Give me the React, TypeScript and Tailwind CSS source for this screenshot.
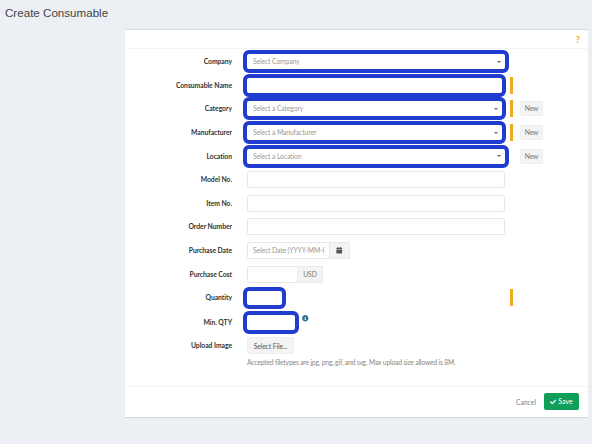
import { ReactNode } from "react"
import { FaCalendar, FaCheck, FaInfoCircle } from "react-icons/fa"

function Caret() {
  return <span className="absolute right-[4.5px] top-[6.5px] border-x-[2px] border-t-[2.5px] border-x-transparent border-t-[#666]" />
}

function Bar() {
  return <span className="h-[17px] w-[3px] bg-[#f0a826]" />
}

function NewButton() {
  return (
    <button className="flex h-[15px] w-[23px] items-center justify-center rounded-[1px] border border-[#eeeeee] bg-[#f4f4f4] pb-[1px] text-[6.8px] tracking-[-0.1px] text-[#777]">
      New
    </button>
  )
}

function Row({ label, children }: { label: string; children: ReactNode }) {
  return (
    <div className="flex h-[23.6px] items-center">
      <label className="w-[107px] pb-[1px] text-right text-[6.8px] font-bold tracking-[-0.05px] text-[#333]">{label}</label>
      <div className="ml-[15px] flex items-center">{children}</div>
    </div>
  )
}

function Select({ text, outlineWidth = "w-[258px]" }: { text: string; outlineWidth?: string }) {
  return (
    <div className={`relative flex h-[15px] items-center rounded-[2px] bg-white pb-[1px] pl-[6px] text-[6.8px] tracking-[-0.12px] text-[#999] outline-[4px] outline-[#1f3ccf] ${outlineWidth}`}>
      {text}
      <Caret />
    </div>
  )
}

function Input() {
  return <div className="h-[17px] w-[258px] rounded-[2px] border border-[#e8e8e8] bg-white" />
}

export default function App() {
  return (
    <div className="h-[444px] w-[592px] overflow-hidden bg-[#ecf0f5] font-['Lato',sans-serif]">
      <h1 className="h-[29px] pl-[5px] pt-[5px] font-['Liberation_Sans',sans-serif] text-[11.6px] leading-[15px] text-[#444]">
        Create Consumable
      </h1>
      <div className="ml-[125px] h-[388px] w-[463px] border-t border-[#d2d6de] bg-white shadow-[0_1px_1px_rgba(0,0,0,0.1)]">
        <div className="mb-[1px] flex h-[19px] justify-end border-b border-[#f4f4f4] pr-[8px] pt-[3px] text-[9px] font-bold text-[#e8a71c]">
          ?
        </div>
        <Row label="Company">
          <Select text="Select Company" />
        </Row>
        <Row label="Consumable Name">
          <div className="h-[15px] w-[255px] rounded-[2px] bg-white outline-[4px] outline-[#1f3ccf]" />
          <span className="w-[8px]" />
          <Bar />
        </Row>
        <Row label="Category">
          <Select text="Select a Category" outlineWidth="w-[255px]" />
          <span className="w-[8px]" />
          <Bar />
          <span className="w-[7px]" />
          <NewButton />
        </Row>
        <Row label="Manufacturer">
          <Select text="Select a Manufacturer" outlineWidth="w-[255px]" />
          <span className="w-[8px]" />
          <Bar />
          <span className="w-[7px]" />
          <NewButton />
        </Row>
        <Row label="Location">
          <Select text="Select a Location" />
          <span className="w-[15px]" />
          <NewButton />
        </Row>
        <Row label="Model No.">
          <Input />
        </Row>
        <Row label="Item No.">
          <Input />
        </Row>
        <Row label="Order Number">
          <Input />
        </Row>
        <Row label="Purchase Date">
          <div className="flex h-[17px] w-[83px] items-center whitespace-nowrap rounded-l-[2px] border border-[#e8e8e8] pl-[5px] text-[6.8px] tracking-[-0.12px] text-[#999]">
            Select Date (YYYY-MM-I
          </div>
          <div className="flex h-[17px] w-[20px] items-center justify-center border border-l-0 border-[#e8e8e8] bg-[#f4f4f4] text-[6.5px] text-[#555]">
            <FaCalendar />
          </div>
        </Row>
        <Row label="Purchase Cost">
          <div className="h-[17px] w-[51px] rounded-l-[2px] border border-[#e8e8e8]" />
          <div className="flex h-[17px] w-[25px] items-center justify-center border border-l-0 border-[#e8e8e8] bg-[#f4f4f4] text-[6.8px] tracking-[-0.05px] text-[#777]">
            USD
          </div>
        </Row>
        <Row label="Quantity">
          <div className="h-[14px] w-[35px] rounded-[2px] bg-white outline-[4px] outline-[#1f3ccf]" />
          <span className="w-[228px]" />
          <Bar />
        </Row>
        <div className="mt-[1px]">
          <Row label="Min. QTY">
            <div className="h-[15px] w-[48px] rounded-[2px] bg-white outline-[4px] outline-[#1f3ccf]" />
            <FaInfoCircle className="-mt-[8px] ml-[7px] text-[6.5px] text-[#31708f]" />
          </Row>
        </div>
        <Row label="Upload Image">
          <button className="flex h-[17px] w-[47px] items-center justify-center rounded-[2px] border border-[#eeeeee] bg-[#f4f4f4] text-[6.8px] tracking-[-0.12px] text-[#555]">
            Select File...
          </button>
        </Row>
        <p className="ml-[122px] text-[6.8px] leading-[9px] tracking-[-0.2px] text-[#888]">
          Accepted filetypes are jpg, png, gif, and svg. Max upload size allowed is 8M.
        </p>
        <div className="mt-[19px] flex h-[31px] items-center justify-end gap-[8px] border-t border-[#f4f4f4] pr-[9px]">
          <span className="text-[6.8px] text-[#72858f]">Cancel</span>
          <button className="flex h-[17px] w-[35px] items-center justify-center gap-[2px] rounded-[2px] bg-[#0f9f58] text-[7px] text-white">
            <FaCheck className="text-[6px]" />
            Save
          </button>
        </div>
      </div>
    </div>
  )
}
